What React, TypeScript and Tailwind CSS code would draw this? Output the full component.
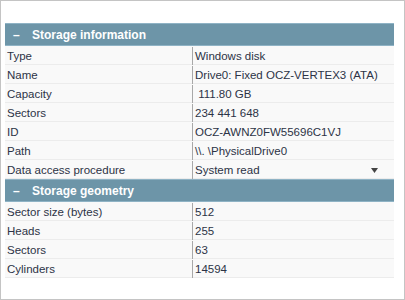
const info = [
  ["Type", "Windows disk"],
  ["Name", "Drive0: Fixed OCZ-VERTEX3 (ATA)"],
  ["Capacity", " 111.80 GB"],
  ["Sectors", "234 441 648"],
  ["ID", "OCZ-AWNZ0FW55696C1VJ"],
  ["Path", "\\\\. \\PhysicalDrive0"],
];

const geometry = [
  ["Sector size (bytes)", "512"],
  ["Heads", "255"],
  ["Sectors", "63"],
  ["Cylinders", "14594"],
];

function Header({ title }: { title: string }) {
  return (
    <div className="flex h-[23px] items-center border-y border-[#8fb3c5] bg-[#6d95a8] pt-[1px] text-[12px] font-bold text-white">
      <span className="w-[27px] pl-[8px]">–</span>
      <span>{title}</span>
    </div>
  );
}

function Row({ label, value, select }: { label: string; value: string; select?: boolean }) {
  return (
    <div className="grid h-[19px] grid-cols-[188px_1fr] border-b border-[#ececec] bg-[#f9f9f9] pt-[1px] text-[11.5px] leading-[18px] text-[#2c3346]">
      <div className="border-r border-[#a8a8a8] pl-[2px]">{label}</div>
      <div className="flex items-center justify-between pl-[2px] pr-[16px]">
        <span className="whitespace-pre">{value}</span>
        {select && (
          <svg width="7" height="5" viewBox="0 0 7 5">
            <path d="M0 0h7L3.5 5z" fill="#444" />
          </svg>
        )}
      </div>
    </div>
  );
}

export default function App() {
  return (
    <div
      className="flex h-[300px] w-[405px] border border-[#c4c4c4] bg-white"
      style={{ fontFamily: "'Liberation Sans', Arial, sans-serif" }}
    >
      <div className="flex-1 pl-[4px] pr-[15px] pt-[22px]">
        <Header title="Storage information" />
        {info.map(([l, v]) => (
          <Row key={l} label={l} value={v} />
        ))}
        <Row label="Data access procedure" value="System read" select />
        <Header title="Storage geometry" />
        {geometry.map(([l, v]) => (
          <Row key={l} label={l} value={v} />
        ))}
      </div>
      <div className="w-[7px] border-l border-[#d6d6d6] bg-[#e8e8e8]" />
    </div>
  );
}
